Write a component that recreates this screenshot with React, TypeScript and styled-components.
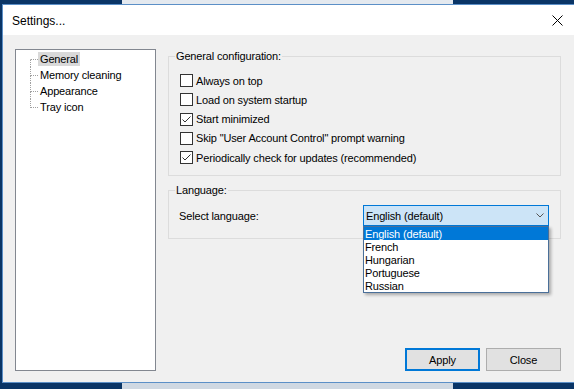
import styled, { createGlobalStyle } from "styled-components";

const GlobalStyle = createGlobalStyle`
  html, body {
    margin: 0;
    padding: 0;
  }
  body {
    font-family: "Liberation Sans", Arial, sans-serif;
    font-size: 11px;
    letter-spacing: -0.15px;
    color: #000;
  }
`;

const OPTIONS = [
  { label: "Always on top", checked: false },
  { label: "Load on system startup", checked: false },
  { label: "Start minimized", checked: true },
  { label: 'Skip "User Account Control" prompt warning', checked: false },
  { label: "Periodically check for updates (recommended)", checked: true },
];

const PAGES = ["General", "Memory cleaning", "Appearance", "Tray icon"];

const LANGUAGES = ["English (default)", "French", "Hungarian", "Portuguese", "Russian"];

const Desktop = styled.div`
  width: 574px;
  height: 389px;
  display: flex;
  flex-direction: column;
  background: #0a3566;
  overflow: hidden;
`;

/* strips of the desktop / other windows peeking out around the dialog */
const Strip = styled.div<{ $h: number; $mid: string }>`
  height: ${(p) => p.$h}px;
  flex-shrink: 0;
  display: grid;
  grid-template-columns: 122px 331px 1fr;

  & > :nth-child(2) {
    background: ${(p) => p.$mid};
  }
`;

const Middle = styled.div`
  flex: 1;
  display: flex;
  padding-left: 2px;
  min-height: 0;
`;

const Window = styled.div`
  flex: 1;
  display: flex;
  flex-direction: column;
  border: 1px solid #5b8fc7;
  border-right: none;
`;

const TitleBar = styled.div`
  height: 30px;
  flex-shrink: 0;
  background: #fff;
  display: flex;
  align-items: center;
  justify-content: space-between;
`;

const Title = styled.span`
  padding-left: 9px;
  padding-top: 2px;
  font-size: 12px;
  letter-spacing: 0;
`;

const CloseBox = styled.div`
  width: 34px;
  height: 30px;
  display: flex;
  align-items: center;
  justify-content: center;
  padding-top: 1px;
`;

const Client = styled.div`
  flex: 1;
  background: #f0f0f0;
  display: flex;
  gap: 12px;
  padding: 14px 13px 11px 12px;
`;

const Tree = styled.ul`
  width: 141px;
  flex-shrink: 0;
  box-sizing: border-box;
  margin: 0;
  padding: 1px 0 0 14px;
  list-style: none;
  background: #fff;
  border: 1px solid #828790;
`;

const TreeRow = styled.li`
  height: 16px;
  display: flex;
  align-items: stretch;
`;

const Branch = styled.div`
  width: 8px;
  display: flex;
  flex-direction: column;
`;

const BranchHalf = styled.div<{ $line: boolean; $tick?: boolean }>`
  flex: 1;
  border-left: ${(p) => (p.$line ? "1px dotted #a0a0a0" : "1px solid transparent")};
  border-bottom: ${(p) => (p.$tick ? "1px dotted #a0a0a0" : "none")};
`;

const TreeLabel = styled.span<{ $selected?: boolean }>`
  align-self: center;
  height: 14px;
  line-height: 14px;
  padding: 0 2px;
  background: ${(p) => (p.$selected ? "#d9d9d9" : "transparent")};
  white-space: nowrap;
`;

const RightColumn = styled.div`
  flex: 1;
  display: flex;
  flex-direction: column;
`;

const Group = styled.fieldset<{ $gapTop?: number }>`
  margin: ${(p) => p.$gapTop ?? 0}px 0 0 0;
  padding: 0;
  border: 1px solid #dcdcdc;
  min-width: 0;
`;

const Legend = styled.legend`
  margin-left: 6px;
  padding: 0 1px;
  line-height: 14px;
`;

const OptionList = styled.div`
  padding: 8px 0 8px 11px;
  display: flex;
  flex-direction: column;
`;

const OptionRow = styled.label`
  height: 19.25px;
  display: flex;
  align-items: center;
  gap: 3px;
  white-space: nowrap;
`;

const Box = styled.span`
  width: 13px;
  height: 13px;
  box-sizing: border-box;
  border: 1px solid #333;
  background: #fff;
  display: flex;
  flex-shrink: 0;
`;

const LanguageRow = styled.div`
  padding: 8px 11px 12px 10px;
  display: flex;
  align-items: center;
  justify-content: space-between;
`;

const Combo = styled.div`
  position: relative;
  width: 186px;
  height: 21px;
  box-sizing: border-box;
  border: 1px solid #0078d7;
  background: #cce4f7;
  display: flex;
  align-items: center;
  justify-content: space-between;
  padding: 0 4px 0 2px;
`;

const DropList = styled.ul`
  position: absolute;
  top: calc(100% + 1px);
  left: -1px;
  width: 186px;
  box-sizing: border-box;
  margin: 0;
  padding: 0;
  list-style: none;
  background: #fff;
  border: 1px solid #4a6f99;
  box-shadow: 2px 2px 3px rgba(0, 0, 0, 0.3);
  z-index: 2;
`;

const DropItem = styled.li<{ $active?: boolean }>`
  height: 13px;
  line-height: 14px;
  padding-left: 1px;
  background: ${(p) => (p.$active ? "#0078d7" : "transparent")};
  color: ${(p) => (p.$active ? "#fff" : "#000")};
`;

const ButtonRow = styled.div`
  margin-top: auto;
  display: flex;
  justify-content: flex-end;
  gap: 6px;
`;

const Button = styled.button<{ $default?: boolean }>`
  width: 75px;
  height: 23px;
  box-sizing: border-box;
  font: inherit;
  letter-spacing: inherit;
  color: #000;
  background: #e1e1e1;
  border: ${(p) => (p.$default ? "2px solid #0078d7" : "1px solid #adadad")};
  padding: 0;
`;

const CheckMark = () => (
  <svg width="11" height="11" viewBox="0 0 11 11">
    <polyline points="1.5,5.5 4,8 9.5,2.5" fill="none" stroke="#333" strokeWidth="1" />
  </svg>
);

const App = () => {
  return (
    <>
      <GlobalStyle />
      <Desktop>
        <Strip $h={4} $mid="#e4e9ef">
          <div />
          <div />
          <div />
        </Strip>
        <Middle>
          <Window>
            <TitleBar>
              <Title>Settings...</Title>
              <CloseBox>
                <svg width="11" height="11" viewBox="0 0 11 11">
                  <path d="M0.5 0.5 L10.5 10.5 M10.5 0.5 L0.5 10.5" stroke="#000" strokeWidth="1" />
                </svg>
              </CloseBox>
            </TitleBar>
            <Client>
              <Tree>
                {PAGES.map((page, i) => (
                  <TreeRow key={page}>
                    <Branch>
                      <BranchHalf $line={i > 0} $tick />
                      <BranchHalf $line={i < PAGES.length - 1} />
                    </Branch>
                    <TreeLabel $selected={i === 0}>{page}</TreeLabel>
                  </TreeRow>
                ))}
              </Tree>
              <RightColumn>
                <Group>
                  <Legend>General configuration:</Legend>
                  <OptionList>
                    {OPTIONS.map((opt) => (
                      <OptionRow key={opt.label}>
                        <Box>{opt.checked && <CheckMark />}</Box>
                        {opt.label}
                      </OptionRow>
                    ))}
                  </OptionList>
                </Group>
                <Group $gapTop={7}>
                  <Legend>Language:</Legend>
                  <LanguageRow>
                    <span>Select language:</span>
                    <Combo>
                      <span>English (default)</span>
                      <svg width="8" height="5" viewBox="0 0 8 5">
                        <polyline points="0.5,0.5 4,4 7.5,0.5" fill="none" stroke="#555" strokeWidth="1" />
                      </svg>
                      <DropList>
                        {LANGUAGES.map((lang, i) => (
                          <DropItem key={lang} $active={i === 0}>
                            {lang}
                          </DropItem>
                        ))}
                      </DropList>
                    </Combo>
                  </LanguageRow>
                </Group>
                <ButtonRow>
                  <Button $default>Apply</Button>
                  <Button>Close</Button>
                </ButtonRow>
              </RightColumn>
            </Client>
          </Window>
        </Middle>
        <Strip $h={6} $mid="#cfd8e2">
          <div />
          <div />
          <div />
        </Strip>
      </Desktop>
    </>
  );
};

export default App;
